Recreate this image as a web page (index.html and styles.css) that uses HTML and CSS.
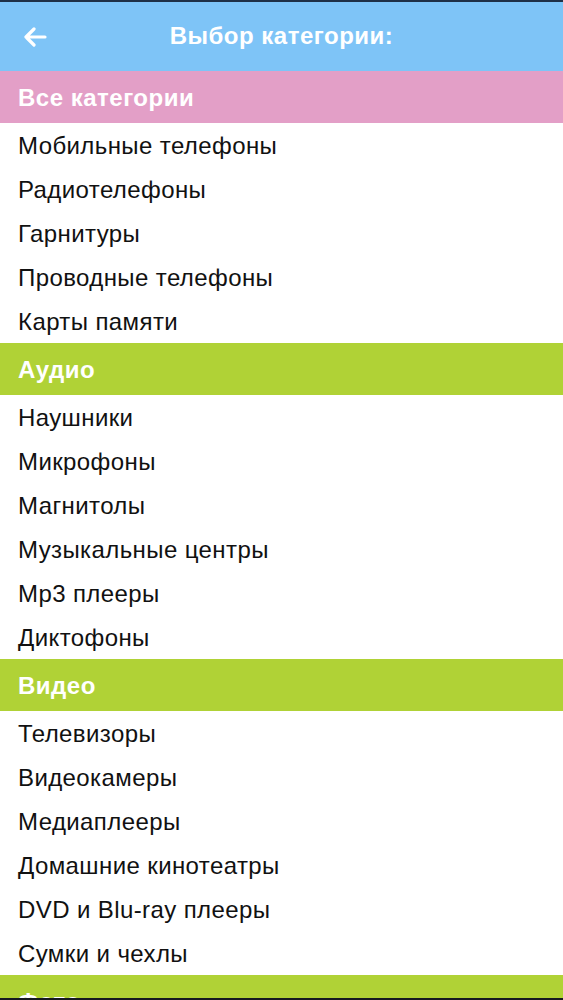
FILE: index.html
```html
<!DOCTYPE html>
<html lang="ru">
<head>
<meta charset="utf-8">
<title>Выбор категории</title>
<link rel="stylesheet" href="styles.css">
</head>
<body>
<div class="screen">
  <header class="topbar">
    <span class="back">
      <svg width="24" height="20" viewBox="0 0 24 20"><path d="M22 10H3M11 2L3 10l8 8" fill="none" stroke="#fff" stroke-width="3.2" stroke-linecap="round" stroke-linejoin="round"/></svg>
    </span>
    <h1 class="title">Выбор категории:</h1>
  </header>
  <div class="section pink">Все категории</div>
  <ul class="list">
    <li>Мобильные телефоны</li>
    <li>Радиотелефоны</li>
    <li>Гарнитуры</li>
    <li>Проводные телефоны</li>
    <li>Карты памяти</li>
  </ul>
  <div class="section green">Аудио</div>
  <ul class="list">
    <li>Наушники</li>
    <li>Микрофоны</li>
    <li>Магнитолы</li>
    <li>Музыкальные центры</li>
    <li>Mp3 плееры</li>
    <li>Диктофоны</li>
  </ul>
  <div class="section green">Видео</div>
  <ul class="list">
    <li>Телевизоры</li>
    <li>Видеокамеры</li>
    <li>Медиаплееры</li>
    <li>Домашние кинотеатры</li>
    <li>DVD и Blu-ray плееры</li>
    <li>Сумки и чехлы</li>
  </ul>
  <div class="section green">Фото</div>
</div>
</body>
</html>
```

FILE: styles.css
```css
html, body {
  margin: 0;
  padding: 0;
  background: #fff;
}
.screen {
  height: 1000px;
  box-sizing: border-box;
  border-top: 2px solid #1f3047;
  border-bottom: 2px solid #151a20;
  overflow: hidden;
  display: flex;
  flex-direction: column;
  font-family: "Liberation Sans", Arial, sans-serif;
}
.topbar {
  flex: 0 0 69px;
  background: #7ec4f7;
  display: flex;
  align-items: center;
  justify-content: center;
  position: relative;
}
.back {
  position: absolute;
  left: 23px;
  top: 25px;
  display: flex;
}
.title {
  margin: 0;
  color: #fff;
  font-size: 24px;
  letter-spacing: 0.5px;
  font-weight: bold;
  padding-bottom: 1px;
}
.section {
  flex: 0 0 52px;
  box-sizing: border-box;
  display: flex;
  align-items: center;
  padding-left: 18px;
  padding-top: 2px;
  color: #fff;
  font-size: 24px;
  letter-spacing: 0.5px;
  font-weight: bold;
}
.pink { background: #e39fc7; }
.green { background: #b0d236; }
.list {
  list-style: none;
  margin: 0;
  padding: 0;
  flex: 0 0 auto;
}
.list li {
  height: 44px;
  box-sizing: border-box;
  display: flex;
  align-items: center;
  padding-left: 18px;
  padding-top: 2px;
  font-size: 24px;
  letter-spacing: 0.4px;
  color: #111;
}
```
